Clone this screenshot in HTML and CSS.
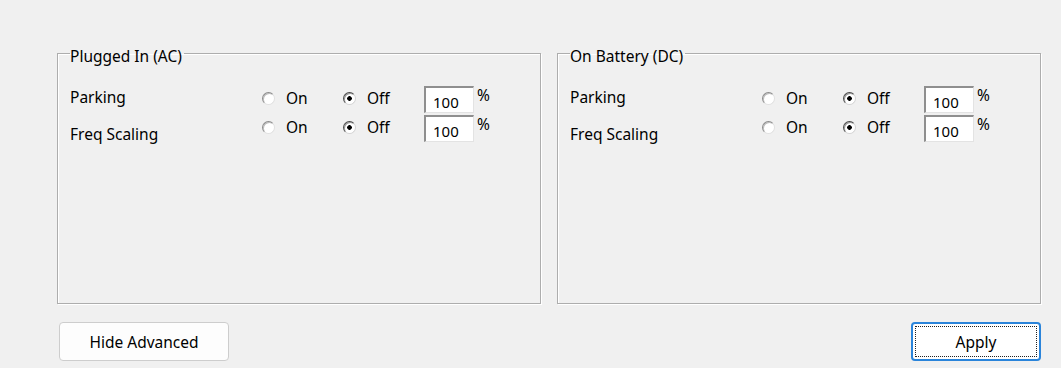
FILE: index.html
```html
<!DOCTYPE html>
<html lang="en">
<head>
    <meta charset="UTF-8">
    <title>Power Settings</title>
    <link rel="stylesheet" href="styles.css">
</head>
<body>
    <div class="panel">
        <div class="groups">
            <!-- AC settings -->
            <fieldset class="group">
                <legend>Plugged In (AC)</legend>
                <div class="row">
                    <span class="label">Parking</span>
                    <label class="radio"><span class="dot"></span>On</label>
                    <label class="radio"><span class="dot checked"></span>Off</label>
                    <input class="num" type="text" value="100">
                    <span class="pct">%</span>
                </div>
                <div class="row">
                    <span class="label label-low">Freq Scaling</span>
                    <label class="radio"><span class="dot"></span>On</label>
                    <label class="radio"><span class="dot checked"></span>Off</label>
                    <input class="num" type="text" value="100">
                    <span class="pct">%</span>
                </div>
            </fieldset>

            <!-- DC settings -->
            <fieldset class="group">
                <legend>On Battery (DC)</legend>
                <div class="row">
                    <span class="label">Parking</span>
                    <label class="radio"><span class="dot"></span>On</label>
                    <label class="radio"><span class="dot checked"></span>Off</label>
                    <input class="num" type="text" value="100">
                    <span class="pct">%</span>
                </div>
                <div class="row">
                    <span class="label label-low">Freq Scaling</span>
                    <label class="radio"><span class="dot"></span>On</label>
                    <label class="radio"><span class="dot checked"></span>Off</label>
                    <input class="num" type="text" value="100">
                    <span class="pct">%</span>
                </div>
            </fieldset>
        </div>

        <div class="buttons">
            <button class="btn">Hide Advanced</button>
            <button class="btn btn-default">Apply</button>
        </div>
    </div>
</body>
</html>
```

FILE: styles.css
```css
body {
    margin: 0;
    background-color: #f0f0f0;
    font-family: "Noto Sans", "Open Sans", sans-serif;
    font-size: 15.5px;
    color: #000;
}
.panel {
    padding: 40px 20px 0 57px;
}
.groups {
    display: grid;
    grid-template-columns: 484px 484px;
    column-gap: 16px;
}
.group {
    margin: 0;
    height: 264px;
    padding: 20px 12px 0 12px;
    border: 1px solid #adadad;
    box-shadow: inset 1px 1px 0 #fff, 1px 1px 0 #fff;
    box-sizing: border-box;
}
.group legend {
    padding: 6px 2px 0 0;
    line-height: 20px;
}
.row {
    display: grid;
    grid-template-columns: 192px 81px 81px 50px auto;
    align-items: start;
    height: 27px;
    margin-bottom: 2px;
}
.label {
    margin-top: 1px;
    line-height: 20px;
}
.label-low {
    margin-top: 9px;
}
.radio {
    display: flex;
    align-items: center;
    gap: 11px;
    margin-top: 2px;
    line-height: 20px;
}
.dot {
    width: 11px;
    height: 11px;
    border-radius: 50%;
    background-color: #fff;
    border: 1px solid;
    border-color: #8a8a8a #e0e0e0 #e0e0e0 #8a8a8a;
    box-shadow: inset 1px 1px 0 #bdbdbd;
}
.dot.checked {
    border-color: #4a4a4a #d4d4d4 #d4d4d4 #4a4a4a;
    box-shadow: inset 1px 1px 0 #9a9a9a;
    background: radial-gradient(circle, #000 0, #000 2px, #fff 2.6px);
}
.num {
    width: 50px;
    height: 27px;
    box-sizing: border-box;
    margin: 0;
    padding: 3px 0 0 7px;
    border-style: solid;
    border-width: 2px 1px 1px 2px;
    border-color: #8f8f8f #e3e3e3 #e3e3e3 #8f8f8f;
    background-color: #fff;
    font-family: inherit;
    font-size: 15px;
    color: #000;
    outline: none;
}
.pct {
    margin: -1px 0 0 3px;
    line-height: 20px;
}
.buttons {
    display: flex;
    justify-content: space-between;
    margin-top: 18px;
    padding-left: 2px;
}
.btn {
    width: 170px;
    height: 39px;
    background-color: #fdfdfd;
    border: 1px solid #cdcdcd;
    border-radius: 4px;
    font-family: inherit;
    font-size: 15.5px;
    color: #000;
    cursor: pointer;
}
.btn-default {
    width: 130px;
    border: 2px solid #2a84da;
    background-color: #fff;
    outline: 1px dotted #222;
    outline-offset: -5px;
}
```
